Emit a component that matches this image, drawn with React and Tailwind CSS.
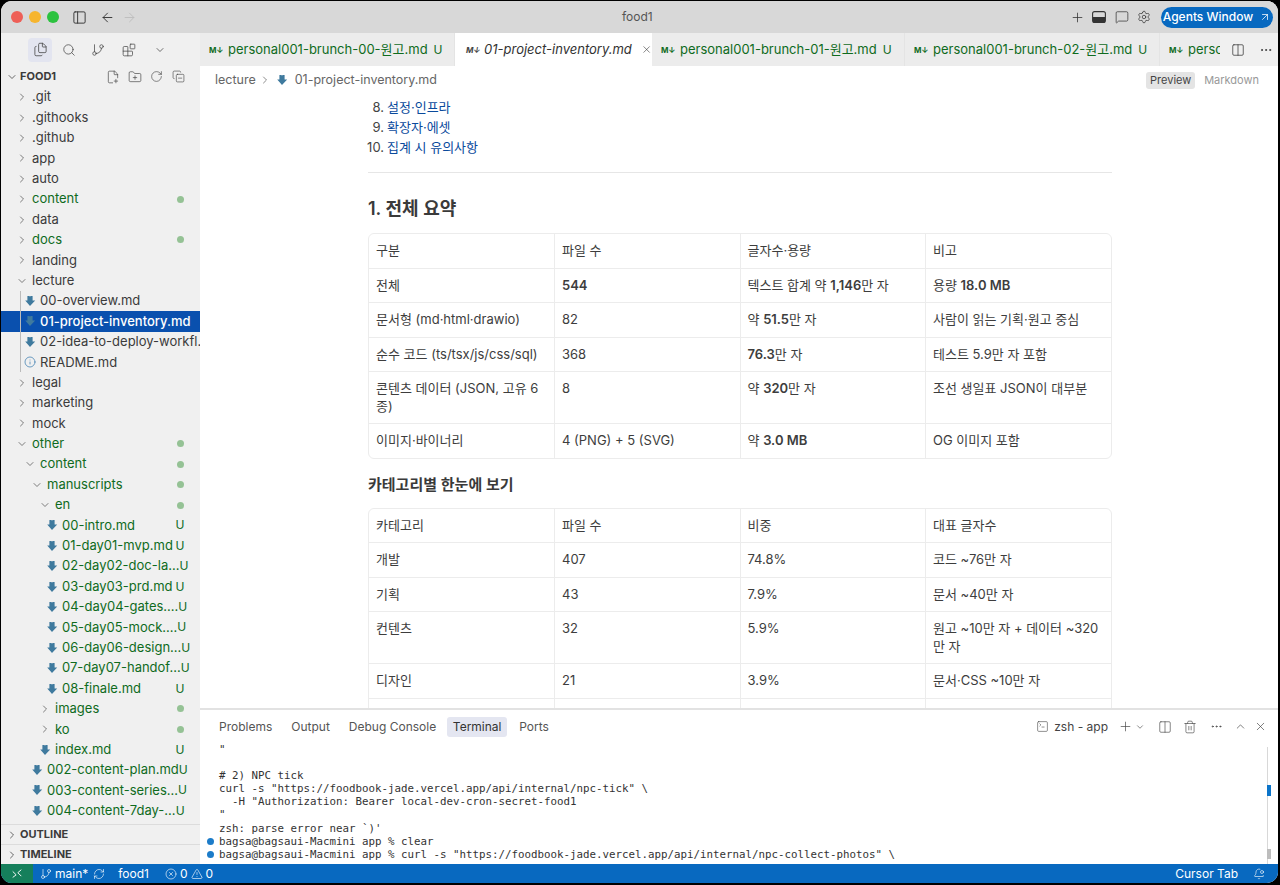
import React from "react";
import {
  PanelLeft, ArrowLeft, ArrowRight, Plus, MessageSquare, Settings, ArrowUpRight, Files, Search, GitBranch, Blocks,
  ChevronDown, ChevronRight, ChevronUp, FilePlus2, FolderPlus, RotateCw, CopyMinus, Info, X, Columns2, Ellipsis,
  SquareTerminal, Trash2, RefreshCw, CircleX, TriangleAlert, BellDot,
} from "lucide-react";

const MdIcon = ({ className = "text-[#3f7a9e]" }) => (
  <svg viewBox="0 0 12 12" className={`w-[12px] h-[12px] ${className}`} fill="currentColor">
    <path d="M3.4 1h2l.6.7.6-.7h2v4.4h2.6L6 11 1.2 5.4h2.2z" />
  </svg>
);

const MTag = ({ className }) => (
  <span className={`text-[8px] font-bold leading-none tracking-[-0.2px] w-[16px] shrink-0 ${className}`}>M↓</span>
);

const G = "text-[#0f6b1d]";

const tree = [
  { n: ".git", k: "d", x: 32 },
  { n: ".githooks", k: "d", x: 32 },
  { n: ".github", k: "d", x: 32 },
  { n: "app", k: "d", x: 32 },
  { n: "auto", k: "d", x: 32 },
  { n: "content", k: "d", x: 32, g: 1, r: "dot" },
  { n: "data", k: "d", x: 32 },
  { n: "docs", k: "d", x: 32, g: 1, r: "dot" },
  { n: "landing", k: "d", x: 32 },
  { n: "lecture", k: "o", x: 32 },
];
const lecture = [
  { n: "00-overview.md", k: "f", x: 40 },
  { n: "01-project-inventory.md", k: "f", x: 40, s: 1 },
  { n: "02-idea-to-deploy-workfl...", k: "f", x: 40 },
  { n: "README.md", k: "i", x: 40 },
];
const tree2 = [
  { n: "legal", k: "d", x: 32 },
  { n: "marketing", k: "d", x: 32 },
  { n: "mock", k: "d", x: 32 },
  { n: "other", k: "o", x: 32, g: 1, r: "dot" },
  { n: "content", k: "o", x: 40, g: 1, r: "dot" },
  { n: "manuscripts", k: "o", x: 47, g: 1, r: "dot" },
  { n: "en", k: "o", x: 55, g: 1, r: "dot" },
  { n: "00-intro.md", k: "f", x: 62, g: 1, r: "U" },
  { n: "01-day01-mvp.md", k: "f", x: 62, g: 1, r: "U" },
  { n: "02-day02-doc-la...", k: "f", x: 62, g: 1, r: "U" },
  { n: "03-day03-prd.md", k: "f", x: 62, g: 1, r: "U" },
  { n: "04-day04-gates....", k: "f", x: 62, g: 1, r: "U" },
  { n: "05-day05-mock....", k: "f", x: 62, g: 1, r: "U" },
  { n: "06-day06-design...", k: "f", x: 62, g: 1, r: "U" },
  { n: "07-day07-handof...", k: "f", x: 62, g: 1, r: "U" },
  { n: "08-finale.md", k: "f", x: 62, g: 1, r: "U" },
  { n: "images", k: "d", x: 55, g: 1, r: "dot" },
  { n: "ko", k: "d", x: 55, g: 1, r: "dot" },
  { n: "index.md", k: "f", x: 55, g: 1, r: "U" },
  { n: "002-content-plan.md", k: "f", x: 47, g: 1, r: "U" },
  { n: "003-content-series...", k: "f", x: 47, g: 1, r: "U" },
  { n: "004-content-7day-...", k: "f", x: 47, g: 1, r: "U" },
];

function Row({ n, k, x, g, r, s }) {
  const color = s ? "text-white font-medium bg-[#0a50ae]" : g ? G : "text-[#3b3b3b]";
  return (
    <div className={`h-[20.4px] flex items-center pr-[15px] text-[13px] whitespace-nowrap ${color}`} style={{ paddingLeft: x - 17 }}>
      <span className="w-[16px] shrink-0 flex items-center">
        {k === "d" && <ChevronRight size={12} strokeWidth={1.5} className="text-[#555]" />}
        {k === "o" && <ChevronDown size={12} strokeWidth={1.5} className="text-[#555]" />}
        {k === "f" && <MdIcon />}
        {k === "i" && <Info size={12} strokeWidth={1.5} className="text-[#3f7fb0]" />}
      </span>
      <span>{n}</span>
      {r === "dot" && (
        <span className="ml-auto w-[10px] flex justify-center">
          <span className="w-[7px] h-[7px] rounded-full bg-[#95c295]" />
        </span>
      )}
      {r === "U" && <span className="ml-auto w-[10px] text-center text-[12px]">U</span>}
    </div>
  );
}

const Tab = ({ w, name, u }) => (
  <div className={`h-full shrink-0 flex items-center pl-[9px] bg-[#ececec] border-r border-[#e4e4e4] text-[13px] whitespace-nowrap ${G}`} style={{ width: w }}>
    <MTag className="mr-[3px]" />
    <span>{name}</span>
    {u && <span className="ml-[6px] text-[12px]">U</span>}
  </div>
);

function Table({ rows, head }) {
  return (
    <div className="w-[744px] rounded-[6px] border border-[#ececec] overflow-hidden">
      <table className="w-full table-fixed border-collapse text-[13px] leading-[17.5px] text-[#3d3d3d]">
        <tbody>
          <tr>
            {head.map((h, i) => (
              <td key={i} className="px-[7px] py-[8px] border-l border-[#ececec] first:border-l-0 align-top">{h}</td>
            ))}
          </tr>
          {rows.map((row, ri) => (
            <tr key={ri} className="border-t border-[#ececec]">
              {row.map((c, i) => (
                <td key={i} className="px-[7px] py-[8px] border-l border-[#ececec] first:border-l-0 align-top">{c}</td>
              ))}
            </tr>
          ))}
        </tbody>
      </table>
    </div>
  );
}

const B = ({ children }) => <span className="font-semibold">{children}</span>;

const term = [
  ["", '"'],
  ["", ""],
  ["", "# 2) NPC tick"],
  ["", 'curl -s "https://foodbook-jade.vercel.app/api/internal/npc-tick" \\'],
  ["", '  -H "Authorization: Bearer local-dev-cron-secret-food1'],
  ["", '"'],
  ["", "zsh: parse error near `)'"],
  ["b", "bagsa@bagsaui-Macmini app % clear"],
  ["b", 'bagsa@bagsaui-Macmini app % curl -s "https://foodbook-jade.vercel.app/api/internal/npc-collect-photos" \\'],
];

export default function App() {
  return (
    <div className="w-[1280px] h-[885px] bg-black pt-px pl-px pr-[2px] pb-[2px] overflow-hidden font-['Inter','Noto_Sans_CJK_KR',sans-serif]">
      <div className="h-full rounded-[11px] overflow-hidden flex flex-col bg-white">
        {/* title bar */}
        <div className="h-[32px] shrink-0 bg-[#d8d8d8] flex items-center relative">
          <div className="flex items-center gap-[6px] pl-[10px]">
            <span className="w-[12px] h-[12px] rounded-full bg-[#ee5f57]" />
            <span className="w-[12px] h-[12px] rounded-full bg-[#f6b52e]" />
            <span className="w-[12px] h-[12px] rounded-full bg-[#2cc23f]" />
          </div>
          <PanelLeft size={15} strokeWidth={1.5} className="ml-[13px] text-[#333]" />
          <ArrowLeft size={15} strokeWidth={1.5} className="ml-[13px] text-[#333]" />
          <ArrowRight size={15} strokeWidth={1.5} className="ml-[7px] text-[#bdbdbd]" />
          <span className="absolute left-[621px] text-[12px] text-[#555]">food1</span>
          <div className="ml-auto flex items-center pr-[5px]">
            <Plus size={15} strokeWidth={1.25} className="text-[#333]" />
            <svg viewBox="0 0 14 12" className="w-[14px] h-[12px] ml-[7px] text-[#333]">
              <rect x="0.6" y="0.6" width="12.8" height="10.8" rx="2" fill="none" stroke="currentColor" strokeWidth="1.1" />
              <rect x="1" y="6" width="12" height="5" fill="currentColor" />
            </svg>
            <MessageSquare size={14} strokeWidth={1.25} className="ml-[9px] text-[#333]" />
            <Settings size={14} strokeWidth={1.25} className="ml-[8px] text-[#333]" />
            <div className="ml-[10px] w-[112px] h-[21px] rounded-full bg-[#0869c0] text-white text-[12px] font-medium flex items-center justify-center gap-[6px]">
              Agents Window <ArrowUpRight size={12} strokeWidth={1.5} />
            </div>
          </div>
        </div>

        <div className="flex-1 min-h-0 flex">
          {/* sidebar */}
          <aside className="w-[199px] shrink-0 bg-[#f0f0f0] flex flex-col">
            <div className="h-[33px] shrink-0 flex items-center pl-[27px] text-[#444]">
              <span className="w-[24px] h-[24px] rounded-[4px] bg-[#e3e5f0] flex items-center justify-center">
                <Files size={15} strokeWidth={1.25} />
              </span>
              <Search size={14} strokeWidth={1.25} className="ml-[10px]" />
              <GitBranch size={14} strokeWidth={1.25} className="ml-[15px]" />
              <Blocks size={14} strokeWidth={1.25} className="ml-[17px]" />
              <ChevronDown size={12} strokeWidth={1.5} className="ml-[18px]" />
            </div>
            <div className="h-[21px] shrink-0 flex items-center pl-[5px] text-[#3b3b3b]">
              <ChevronDown size={12} strokeWidth={1.5} />
              <span className="ml-[2px] text-[11px] font-bold">FOOD1</span>
              <FilePlus2 size={14} strokeWidth={1.1} className="ml-[50px]" />
              <FolderPlus size={14} strokeWidth={1.1} className="ml-[8px]" />
              <RotateCw size={13} strokeWidth={1.1} className="ml-[8px]" />
              <CopyMinus size={13} strokeWidth={1.1} className="ml-[9px]" />
            </div>
            <div className="flex-1 min-h-0 overflow-hidden">
              {tree.map((r, i) => <Row key={i} {...r} />)}
              <div className="relative">
                {lecture.map((r, i) => <Row key={i} {...r} />)}
                <span className="absolute left-[19px] top-0 bottom-0 w-px bg-[#bbbbbb]" />
              </div>
              {tree2.map((r, i) => <Row key={i} {...r} />)}
            </div>
            {["OUTLINE", "TIMELINE"].map((t) => (
              <div key={t} className="h-[20px] shrink-0 border-t border-[#dcdcdc] flex items-center pl-[5px] text-[#3b3b3b]">
                <ChevronRight size={12} strokeWidth={1.5} />
                <span className="ml-[2px] text-[11px] font-bold">{t}</span>
              </div>
            ))}
          </aside>

          {/* main */}
          <main className="flex-1 min-w-0 flex flex-col">
            <div className="h-[33px] shrink-0 flex bg-[#f0f0f0]">
              <div className="flex-1 min-w-0 flex overflow-hidden">
                <Tab w={255} name="personal001-brunch-00-원고.md" u />
                <div className="h-full w-[197px] shrink-0 bg-white flex items-center pl-[11px] text-[13px] italic text-[#333] whitespace-nowrap">
                  <MTag className="mr-[2px] text-[#444]" />
                  <span>01-project-inventory.md</span>
                  <X size={13} strokeWidth={1.25} className="ml-[9px]" />
                </div>
                <Tab w={253} name="personal001-brunch-01-원고.md" u />
                <Tab w={255} name="personal001-brunch-02-원고.md" u />
                <Tab w={80} name="personal001-brunch-03-원고.md" />
              </div>
              <div className="w-[58px] shrink-0 flex items-center pl-[11px] text-[#333]">
                <Columns2 size={14} strokeWidth={1.25} />
                <Ellipsis size={14} strokeWidth={1.5} className="ml-[14px]" />
              </div>
            </div>

            <div className="flex-1 min-h-0 overflow-hidden flex flex-col">
              <div className="h-[28px] shrink-0 flex items-center pl-[15px] pr-[19px] text-[12.5px] text-[#666]">
                <span>lecture</span>
                <ChevronRight size={12} strokeWidth={1.5} className="ml-[3px]" />
                <MdIcon className="text-[#3f7a9e] ml-[5px]" />
                <span className="ml-[7px]">01-project-inventory.md</span>
                <span className="ml-auto h-[17px] w-[49px] rounded-[3px] bg-[#e4e4e4] text-[11px] text-[#444] flex items-center justify-center">Preview</span>
                <span className="ml-[9px] text-[11px] text-[#999]">Markdown</span>
              </div>
              <div className="flex-1 min-h-0 overflow-hidden pl-[168px] pt-[3px]">
                <ol className="text-[13px] leading-[20px]">
                  {[["8.", "설정·인프라"], ["9.", "확장자·에셋"], ["10.", "집계 시 유의사항"]].map(([a, t]) => (
                    <li key={a} className="flex">
                      <span className="w-[16px] text-right text-[#444] whitespace-nowrap flex justify-end">{a}</span>
                      <span className="ml-[3px] text-[#0a4a9c]">{t}</span>
                    </li>
                  ))}
                </ol>
                <div className="w-[744px] h-px bg-[#e6e6e6] mt-[15px]" />
                <h2 className="text-[18px] leading-[24px] font-semibold text-[#3a3a3a] mt-[24px]">1. 전체 요약</h2>
                <div className="mt-[12px]">
                  <Table
                    head={["구분", "파일 수", "글자수·용량", "비고"]}
                    rows={[
                      ["전체", <B>544</B>, <span>텍스트 합계 약 <B>1,146</B>만 자</span>, <span>용량 <B>18.0 MB</B></span>],
                      ["문서형 (md·html·drawio)", "82", <span>약 <B>51.5</B>만 자</span>, "사람이 읽는 기획·원고 중심"],
                      ["순수 코드 (ts/tsx/js/css/sql)", "368", <span><B>76.3</B>만 자</span>, "테스트 5.9만 자 포함"],
                      ["콘텐츠 데이터 (JSON, 고유 6종)", "8", <span>약 <B>320</B>만 자</span>, "조선 생일표 JSON이 대부분"],
                      ["이미지·바이너리", "4 (PNG) + 5 (SVG)", <span>약 <B>3.0 MB</B></span>, "OG 이미지 포함"],
                    ]}
                  />
                </div>
                <h3 className="text-[15px] leading-[20px] font-semibold text-[#3a3a3a] mt-[16px]">카테고리별 한눈에 보기</h3>
                <div className="mt-[13px]">
                  <Table
                    head={["카테고리", "파일 수", "비중", "대표 글자수"]}
                    rows={[
                      ["개발", "407", "74.8%", "코드 ~76만 자"],
                      ["기획", "43", "7.9%", "문서 ~40만 자"],
                      ["컨텐츠", "32", "5.9%", "원고 ~10만 자 + 데이터 ~320만 자"],
                      ["디자인", "21", "3.9%", "문서·CSS ~10만 자"],
                      ["운영", "13", "2.4%", "~10만 자"],
                    ]}
                  />
                </div>
              </div>
            </div>

            {/* panel */}
            <div className="h-[156px] shrink-0 border-t-2 border-[#e2e2e2] flex flex-col relative bg-white">
              <div className="h-[33px] shrink-0 flex items-center pl-[19px] pr-[11px] text-[12px] text-[#555]">
                <span>Problems</span>
                <span className="ml-[19px]">Output</span>
                <span className="ml-[19px]">Debug Console</span>
                <span className="ml-[11px] h-[20px] w-[60px] rounded-[3px] bg-[#e4e6f1] text-[#333] flex items-center justify-center">Terminal</span>
                <span className="ml-[12px]">Ports</span>
                <div className="ml-auto flex items-center text-[#444]">
                  <SquareTerminal size={13} strokeWidth={1.1} />
                  <span className="ml-[5px] text-[12px]">zsh - app</span>
                  <Plus size={15} strokeWidth={1.1} className="ml-[10px]" />
                  <ChevronDown size={10} strokeWidth={1.5} className="ml-[2px]" />
                  <Columns2 size={14} strokeWidth={1.1} className="ml-[13px]" />
                  <Trash2 size={14} strokeWidth={1.1} className="ml-[11px]" />
                  <Ellipsis size={13} strokeWidth={1.5} className="ml-[13px]" />
                  <ChevronUp size={13} strokeWidth={1.25} className="ml-[11px]" />
                  <X size={13} strokeWidth={1.25} className="ml-[7px]" />
                </div>
              </div>
              <div className="flex-1 min-h-0 overflow-hidden pl-[7px] font-['DejaVu_Sans_Mono',monospace] text-[10.8px] leading-[13.1px] text-[#333] whitespace-pre">
                {term.map(([d, t], i) => (
                  <div key={i} className="h-[13.1px] flex items-center">
                    <span className="w-[12px] shrink-0 flex">
                      {d && <span className="w-[7px] h-[7px] rounded-full bg-[#1c7cc9]" />}
                    </span>
                    <span>{t || " "}</span>
                  </div>
                ))}
              </div>
              <span className="absolute right-[7px] top-[37px] bottom-0 w-[4px] border-l border-[#d8d8d8]" />
              <span className="absolute right-[7px] top-[75px] h-[11px] w-[4px] bg-[#0b74c9]" />
              <span className="absolute right-[7px] bottom-[5px] h-[10px] w-[4px] bg-[#bdbdbd]" />
            </div>
          </main>
        </div>

        {/* status bar */}
        <div className="h-[19px] shrink-0 bg-[#0869c0] flex items-center text-white text-[12px]">
          <div className="w-[32px] h-full bg-[#157f5b] flex items-center justify-center">
            <svg viewBox="0 0 14 14" className="w-[12px] h-[12px]" fill="none" stroke="currentColor" strokeWidth="1.1">
              <path d="M2 4l4 4-4 3M12 2L8 5.5l4 4" />
            </svg>
          </div>
          <GitBranch size={12} strokeWidth={1.25} className="ml-[7px]" />
          <span className="ml-[3px]">main*</span>
          <RefreshCw size={12} strokeWidth={1.25} className="ml-[5px]" />
          <span className="ml-[13px]">food1</span>
          <CircleX size={12} strokeWidth={1.25} className="ml-[16px]" />
          <span className="ml-[3px]">0</span>
          <TriangleAlert size={12} strokeWidth={1.25} className="ml-[3px]" />
          <span className="ml-[3px]">0</span>
          <span className="ml-auto">Cursor Tab</span>
          <BellDot size={12} strokeWidth={1.25} className="ml-[15px] mr-[13px]" />
        </div>
      </div>
    </div>
  );
}
